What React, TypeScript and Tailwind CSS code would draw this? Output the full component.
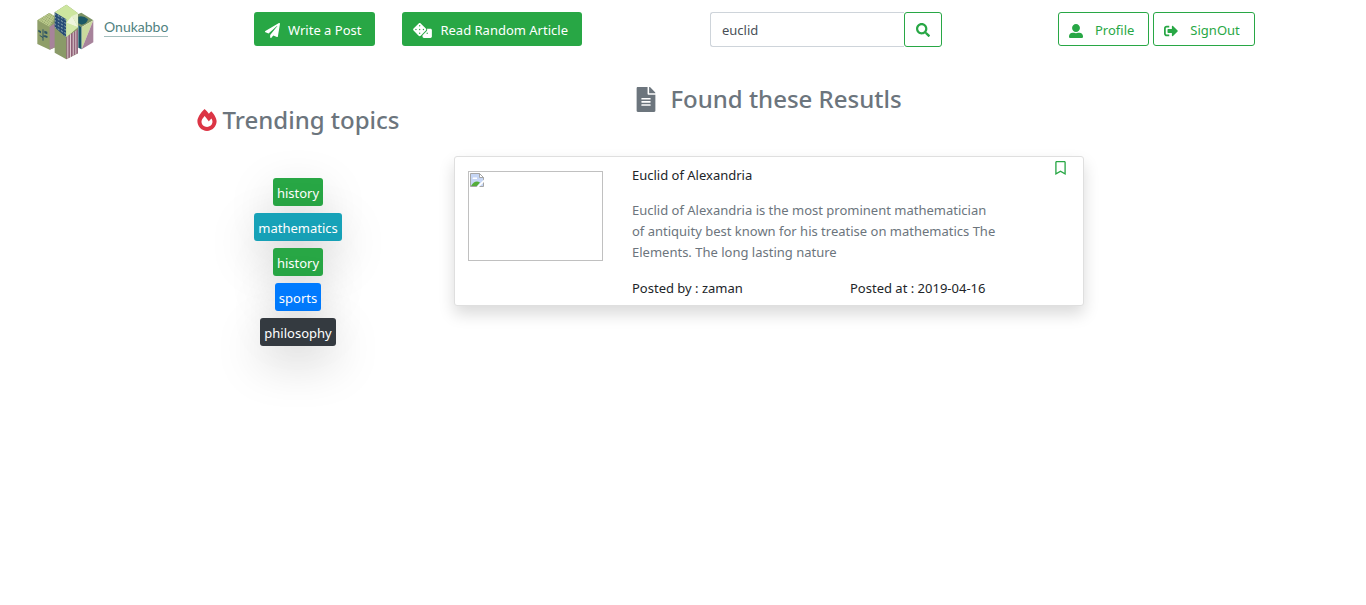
import type { ReactNode } from "react";
import {
  FaDice,
  FaFileAlt,
  FaFireAlt,
  FaPaperPlane,
  FaRegBookmark,
  FaSearch,
  FaSignOutAlt,
  FaUserAlt,
} from "react-icons/fa";

const topics = [
  { name: "history", color: "bg-[#28a745]" },
  { name: "mathematics", color: "bg-[#17a2b8]" },
  { name: "history", color: "bg-[#28a745]" },
  { name: "sports", color: "bg-[#007bff]" },
  { name: "philosophy", color: "bg-[#343a40]" },
];

function LogoMark() {
  return (
    <svg viewBox="50 12 171 168" className="h-14 w-[57px]" aria-hidden="true">
      <defs>
        <pattern id="dots" width="10" height="10" patternUnits="userSpaceOnUse" patternTransform="skewY(29)">
          <rect width="10" height="10" fill="#264a75" />
          <rect x="2" y="3" width="5" height="3" fill="#a9c7c0" />
        </pattern>
        <pattern id="weave" width="6" height="6" patternUnits="userSpaceOnUse" patternTransform="rotate(35)">
          <rect width="6" height="6" fill="#bccb8c" />
          <rect width="3" height="3" fill="#8b9c66" />
        </pattern>
        <pattern id="stripes" width="8" height="10" patternUnits="userSpaceOnUse">
          <rect width="8" height="10" fill="#e3d5d6" />
          <rect width="5" height="10" fill="#8e5f76" />
        </pattern>
      </defs>
      <path d="M51 61 87 39 106 50V142L88 149 51 132Z" fill="#8f9e69" />
      <path d="M51 61 87 39 106 50 88 80Z" fill="url(#weave)" />
      <path d="M88 80 106 68V140L88 149Z" fill="#a7839b" />
      <path d="M68 88V122M68 113 58 106M68 108 81 110" stroke="#2c5365" strokeWidth="3" fill="none" />
      <path d="M54 89 62 94V100L54 95ZM72 92 81 95V103L72 100ZM72 105 81 108V114L72 111Z" fill="#2c5365" />
      <path d="M172 43 183 38 219 61 183 82 172 76Z" fill="#7d9365" />
      <path d="M174 50Q190 46 203 58Q200 72 184 74L174 70Z" fill="#1c5866" />
      <path d="M174 76 184 82V148L174 143Z" fill="#175364" />
      <path d="M184 82 219 61 184 148Z" fill="#c9d99d" />
      <path d="M219 61V127L184 148Z" fill="#a7839b" />
      <path d="M103 37 138 14 173 40V160L138 178 103 158Z" fill="#8a9a68" />
      <path d="M103 37 138 14 173 40 138 64Z" fill="#cde69f" />
      <path d="M103 37 138 58V113L103 82Z" fill="url(#dots)" />
      <path d="M138 60 154 46 173 80 138 112Z" fill="#cde69f" />
      <path d="M155 48 173 40V82Z" fill="#e4f0cc" />
      <path d="M138 68 155 48 173 82Z" fill="#eef5dd" />
      <path d="M138 68 173 82 138 111Z" fill="#d2e8a9" />
      <path d="M138 111 173 88V160L138 178Z" fill="url(#stripes)" />
    </svg>
  );
}

function BrokenImage() {
  return (
    <div role="img" aria-label="Article cover" className="h-[90px] w-[135px] shrink-0 border border-[#c0c0c0] p-px">
      <svg viewBox="0 0 14 14" className="size-3.5">
        <path d="M0.5 0.5H9.5L13.5 4.5V13.5H0.5Z" fill="#c6d6f5" stroke="#a5a5a5" />
        <path d="M3 4.5H7V6H2.5Z" fill="#fff" />
        <path d="M1 13Q5 6.500 10 9.500L7 13Z" fill="#55ad3b" />
        <path d="M14 6.500V9L9 14H6.500Z" fill="#fff" />
        <path d="M9.500 0.500V4.500H13.500Z" fill="#fff" stroke="#a5a5a5" />
      </svg>
    </div>
  );
}

function SolidButton({ children }: { children: ReactNode }) {
  return (
    <button
      type="button"
      className="flex h-[34px] items-center gap-2 rounded-[3px] bg-[#28a745] pt-[3px] pr-3.5 pl-[11px] whitespace-nowrap text-white"
    >
      {children}
    </button>
  );
}

function OutlineButton({ children }: { children: ReactNode }) {
  return (
    <button
      type="button"
      className="flex h-[34px] items-center gap-3 rounded-[3px] border border-[#28a745] pt-[3px] pr-3.5 pl-2.5 whitespace-nowrap text-[#28a745]"
    >
      {children}
    </button>
  );
}

export default function App() {
  return (
    <div className="min-h-screen bg-white font-['Noto_Sans','Open_Sans',sans-serif] text-[13px] text-[#212529]">
      <header className="grid grid-cols-[254fr_456fr_348fr_308fr] items-start">
        <a href="#" className="flex items-start gap-2.5 pt-1 pl-[37px]">
          <LogoMark />
          <span className="mt-3.5 border-b border-[#a3bdbc] font-['Lato',sans-serif] text-[14px] leading-[18px] text-[#51827f]">
            Onukabbo
          </span>
        </a>
        <nav className="flex gap-[27px] pt-3">
          <SolidButton>
            <FaPaperPlane className="size-[15px]" />
            Write a Post
          </SolidButton>
          <SolidButton>
            <FaDice className="h-[15px] w-[19px]" />
            Read Random Article
          </SolidButton>
        </nav>
        <form className="flex pt-3" onSubmit={(e) => e.preventDefault()}>
          <input
            type="text"
            aria-label="Search"
            defaultValue="euclid"
            className="h-[35px] w-[194px] rounded-l-[3px] border border-r-0 border-[#ced4da] px-[11px] text-[#495057] outline-none"
          />
          <button
            type="submit"
            aria-label="Search articles"
            className="flex h-[35px] w-[38px] items-center justify-center rounded-[3px] border border-[#28a745] text-[#28a745]"
          >
            <FaSearch className="size-3.5" />
          </button>
        </form>
        <div className="flex gap-1 pt-3">
          <OutlineButton>
            <FaUserAlt className="size-3.5" />
            Profile
          </OutlineButton>
          <OutlineButton>
            <FaSignOutAlt className="size-3.5" />
            SignOut
          </OutlineButton>
        </div>
      </header>

      <main className="grid grid-cols-[142fr_312fr_630fr_282fr]">
        <aside className="col-start-2 flex flex-col items-center pt-11">
          <h2 className="flex items-center gap-1.5 text-[24px] leading-8 font-medium whitespace-nowrap text-[#6c757d]">
            <FaFireAlt className="h-[22px] w-5 text-[#dc3545]" />
            Trending topics
          </h2>
          <ul className="flex flex-col items-center gap-[7px] pt-[42px]">
            {topics.map((topic, i) => (
              <li
                key={i}
                className={`rounded-[3px] px-1 pt-1 pb-0.5 leading-[22px] text-white shadow-[0_16px_48px_rgba(0,0,0,0.175)] ${topic.color}`}
              >
                <a href="#">{topic.name}</a>
              </li>
            ))}
          </ul>
        </aside>

        <section className="col-start-3 pt-[23px]">
          <h2 className="flex items-center justify-center gap-3.5 text-[24px] leading-8 font-medium text-[#6c757d]">
            <FaFileAlt className="h-[25px] w-5" />
            Found these Resutls
          </h2>
          <article className="mt-[41px] flex rounded-[3px] border border-[#dfdfdf] bg-white pr-4 pb-1.5 pl-[13px] shadow-[0_8px_16px_rgba(0,0,0,0.15)]">
            <div className="pt-3.5">
              <BrokenImage />
            </div>
            <div className="ml-[29px] flex-1 pt-2 leading-[21px]">
              <h3>Euclid of Alexandria</h3>
              <p className="mt-3.5 max-w-[367px] text-[#6c757d]">
                Euclid of Alexandria is the most prominent mathematician of antiquity best known for his treatise on
                mathematics The Elements. The long lasting nature
              </p>
              <div className="mt-[15px] grid grid-cols-[218fr_203fr]">
                <span>Posted by : zaman</span>
                <span>Posted at : 2019-04-16</span>
              </div>
            </div>
            <button type="button" aria-label="Bookmark" className="mt-1 flex h-3.5 w-3.5 justify-center text-[#28a745]">
              <FaRegBookmark className="h-3.5 w-[11px]" />
            </button>
          </article>
        </section>
      </main>
    </div>
  );
}
